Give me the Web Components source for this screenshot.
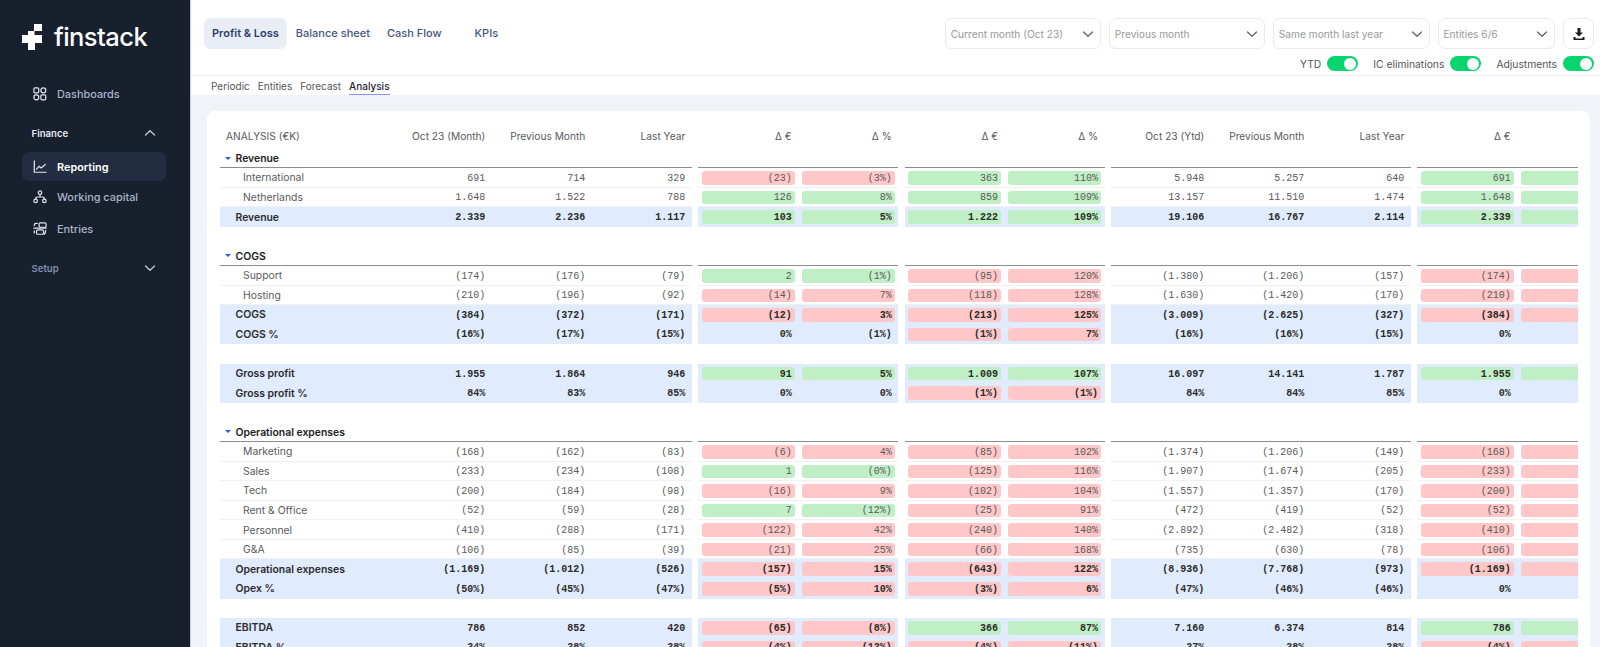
<!DOCTYPE html>
<html lang="en">
<head>
<meta charset="utf-8">
<title>finstack</title>
<style>
    html, body { margin: 0; height: 100%; overflow: hidden; }
    body { font-family: Inter, 'Noto Sans', sans-serif; background: #f0f4f9; }
</style>
</head>
<body>
<fin-app></fin-app>
<script>
const ICONS = {
    dashboards: '<rect x="1" y="1" width="5.6" height="5.6" rx="1.2"/><rect x="9" y="1" width="5.6" height="5.6" rx="2.6"/><rect x="1" y="9" width="5.6" height="5.6" rx="2.6"/><rect x="9" y="9" width="5.6" height="5.6" rx="1.2"/>',
    reporting: '<path d="M1.5 1v13h13.5"/><path d="M4 10.5l3-3.2 2.4 1.8 4.6-4"/>',
    capital: '<circle cx="8" cy="3" r="2"/><circle cx="3" cy="12.5" r="2"/><circle cx="13" cy="12.5" r="2"/><path d="M8 5v3M3 10.5c0-1.6.6-2.5 2-2.5h6c1.4 0 2 .9 2 2.5"/>',
    entries: '<rect x="7" y="1" width="8" height="5" rx="1.5"/><rect x="4" y="9" width="8" height="5" rx="1.5"/><path d="M5 1.5H3.5C2 1.5 1.5 2.5 1.5 4M1 7h14M14.5 9.5c0 2-.5 3.5-1.5 4.5M1.5 10v2.5"/>'
};

const CHEVRON = '<svg width="12" height="12" viewBox="0 0 12 12" fill="none" stroke="currentColor" stroke-width="1.3" stroke-linecap="round" stroke-linejoin="round"><path d="D"/></svg>';

class FinNavItem extends HTMLElement {
    connectedCallback() {
        const active = this.hasAttribute('active');
        this.attachShadow({ mode: 'open' }).innerHTML = `
        <style>
            :host { display: block; }
            .item {
                display: flex;
                align-items: center;
                gap: 10px;
                height: 29px;
                margin-left: 22px;
                width: 144px;
                padding-left: 11px;
                box-sizing: border-box;
                border-radius: 7px;
                font-size: 10.9px;
                font-weight: ${active ? 600 : 500};
                color: ${active ? '#ffffff' : '#a8b5ca'};
                background: ${active ? '#232d41' : 'transparent'};
            }
            svg { flex: none; color: #dfe4ec; }
        </style>
        <div class="item">
            <svg width="14" height="14" viewBox="0 0 16 16" fill="none" stroke="currentColor" stroke-width="1.4" stroke-linecap="round">${ICONS[this.getAttribute('icon')]}</svg>
            <slot></slot>
        </div>`;
    }
}

class FinNavGroup extends HTMLElement {
    connectedCallback() {
        const open = this.hasAttribute('open');
        this.attachShadow({ mode: 'open' }).innerHTML = `
        <style>
            :host { display: flex; align-items: center; justify-content: space-between; padding: 0 34px 0 31.5px; height: 20px;
                font-size: 9.6px; font-weight: 600; color: ${open ? '#e6eaf1' : '#7f92b0'}; }
            svg { color: #c3ccd9; }
        </style>
        <slot></slot>${CHEVRON.replace('D', open ? 'M1.5 8L6 3.8 10.5 8' : 'M1.5 4L6 8.2 10.5 4')}`;
    }
}

class FinSidebar extends HTMLElement {
    connectedCallback() {
        this.attachShadow({ mode: 'open' }).innerHTML = `
        <style>
            :host { display: block; flex: none; width: 191px; height: 100%; background: #18202e; border-right: 1px solid #c9ced6; box-sizing: border-box; }
            .logo { display: flex; align-items: center; gap: 12px; height: 26px; padding: 24px 0 0 22px; }
            .word { font-size: 25.5px; font-weight: 500; color: #fff; letter-spacing: -.55px; line-height: 26px; }
            .dash { margin-top: 29px; }
            .finance { margin-top: 15px; }
            .reporting { margin-top: 9px; }
            .capital { margin-top: 1.500px; }
            .entries { margin-top: 2.500px; }
            .setup { margin-top: 15px; }
        </style>
        <div class="logo">
            <svg width="20" height="26" viewBox="0 0 20 26" fill="#fff"><path d="M12 0h8v7h-8z"/><path d="M6 7h6.500v4H20v8h-7v7H6v-7H0v-8h6z"/></svg>
            <span class="word">finstack</span>
        </div>
        <fin-nav-item class="dash" icon="dashboards">Dashboards</fin-nav-item>
        <fin-nav-group class="finance" open>Finance</fin-nav-group>
        <fin-nav-item class="reporting" icon="reporting" active>Reporting</fin-nav-item>
        <fin-nav-item class="capital" icon="capital">Working capital</fin-nav-item>
        <fin-nav-item class="entries" icon="entries">Entries</fin-nav-item>
        <fin-nav-group class="setup">Setup</fin-nav-group>`;
    }
}

class FinSelect extends HTMLElement {
    connectedCallback() {
        this.attachShadow({ mode: 'open' }).innerHTML = `
        <style>
            :host {
                display: flex; align-items: center; justify-content: space-between;
                box-sizing: border-box; height: 31px; width: ${this.getAttribute('width')}px;
                padding: 0 6px 0 4.500px;
                border: 1px solid #e8eaee; border-radius: 7px; background: #fff;
                font-size: 10.2px; color: #9a9a9a;
            }
            svg { color: #666; }
        </style>
        <slot></slot>${CHEVRON.replace('D', 'M1.500 4L6 8.200 10.500 4')}`;
    }
}

class FinToggle extends HTMLElement {
    connectedCallback() {
        this.attachShadow({ mode: 'open' }).innerHTML = `
        <style>
            :host { display: flex; align-items: center; gap: 6px; font-size: 10.3px; color: #555; }
            .track { position: relative; width: 31px; height: 15px; border-radius: 8px; background: #08d56e; }
            .knob { position: absolute; right: 2px; top: 1.5px; width: 12px; height: 12px; border-radius: 50%; background: #fff; }
        </style>
        <slot></slot><div class="track"><div class="knob"></div></div>`;
    }
}

class FinTopbar extends HTMLElement {
    connectedCallback() {
        this.attachShadow({ mode: 'open' }).innerHTML = `
        <style>
            :host { display: flex; justify-content: space-between; box-sizing: border-box; height: 76px; padding: 18px 6px 0 13px; background: #fff; border-bottom: 1px solid #ececf0; }
            .tabs { display: flex; align-items: flex-start; font-size: 11px; font-weight: 500; color: #44557c; }
            .tabs span { display: block; line-height: 31px; }
            .on { padding: 0 8px; background: #e9edf5; border-radius: 7px; font-weight: 600; color: #2c3e6b; margin-right: 9px; }
            .cash { margin-left: 17px; }
            .kpi { margin-left: 33px; }
            .tools { display: flex; flex-direction: column; align-items: flex-end; gap: 7px; }
            .row { display: flex; gap: 8.100px; }
            .toggles { gap: 15px; }
            .dl { box-sizing: border-box; width: 31px; height: 31px; display: flex; align-items: center; justify-content: center; border: 1px solid #e8eaee; border-radius: 7px; }
        </style>
        <div class="tabs">
            <span class="on">Profit &amp; Loss</span>
            <span>Balance sheet</span>
            <span class="cash">Cash Flow</span>
            <span class="kpi">KPIs</span>
        </div>
        <div class="tools">
            <div class="row">
                <fin-select width="156">Current month (Oct 23)</fin-select>
                <fin-select width="156">Previous month</fin-select>
                <fin-select width="156.500">Same month last year</fin-select>
                <fin-select width="117">Entities 6/6</fin-select>
                <div class="dl"><svg width="14" height="14" viewBox="0 0 14 14" fill="#1c1c1c"><path d="M5.500 1h3v4.500h2.500L7 9.500 3 5.500h2.500z"/><path d="M1.500 10h2v1.500h7V10h2v3h-11z"/></svg></div>
            </div>
            <div class="row toggles">
                <fin-toggle>YTD</fin-toggle>
                <fin-toggle>IC eliminations</fin-toggle>
                <fin-toggle>Adjustments</fin-toggle>
            </div>
        </div>`;
    }
}

class FinSubtabs extends HTMLElement {
    connectedCallback() {
        this.attachShadow({ mode: 'open' }).innerHTML = `
        <style>
            :host { display: flex; gap: 8px; box-sizing: border-box; height: 19px; padding-left: 20px; background: #fff; font-size: 10px; color: #555; line-height: 20px; }
            span { display: block; height: 19px; box-sizing: border-box; }
            .on { color: #1f2433; font-weight: 500; border-bottom: 1px solid #8f95ee; }
        </style>
        <span>Periodic</span><span>Entities</span><span>Forecast</span><span class="on">Analysis</span>`;
    }
}

class FinRow extends HTMLElement {
    connectedCallback() {
        const kind = this.getAttribute('kind');
        const values = (this.getAttribute('values') || '').split('|');

        // green/red pills carry a g: or r: prefix in the values attribute
        const cell = (v = '') => {
            const tone = /^[gr]:/.test(v) ? v[0] : '';
            return `<div class="cell ${tone ? 'pill ' + tone : ''}"><span>${tone ? v.slice(2) : v}</span></div>`;
        };
        const group = (from, to) => `<div class="group">${values.slice(from, to).map(cell).join('') || '<div></div>'}</div>`;

        this.attachShadow({ mode: 'open' }).innerHTML = `
        <style>
            :host {
                display: grid;
                grid-template-columns: 472px 200px 200px 300px 200px;
                column-gap: 6.330px;
                height: 19.565px;
                font-size: 10px;
                line-height: 12px;
                color: #5a5a5a;
            }
            .group { display: flex; box-sizing: border-box; min-width: 0; --line: transparent; background: linear-gradient(var(--line), var(--line)) 0 100% / 100% 1px no-repeat; }
            .label { flex: 1; min-width: 0; display: flex; align-items: center; font-family: Inter, sans-serif; font-size: 10.400px; white-space: nowrap; box-sizing: border-box; padding: 1px 0 0 23px; }
            .cell { flex: none; width: 100px; box-sizing: border-box; padding-right: 6.670px; display: flex; align-items: center; justify-content: flex-end; font-family: 'Liberation Mono', monospace; }
            .cell span { position: relative; top: 1px; }
            .pill { position: relative; }
            .pill::before { content: ''; position: absolute; left: 3.330px; right: 3.330px; top: 3px; bottom: 3px; border-radius: 3px; }
            .r::before { background: #ffc7c7; }
            .g::before { background: #c0efc5; }

            :host([kind=head]) .cell { font-family: Inter, sans-serif; font-size: 10.200px; }
            :host([kind=head]) .cell span { top: -2.500px; }
            :host([kind=head]) .label { padding: 0 0 5px 2px; font-size: 10.200px; margin-left: 4px; }

            :host([kind=section]) .group { --line: #8c8c8c; }
            :host([kind=section]) .label { padding-left: 15.500px; font-weight: 600; color: #222; position: relative; }
            :host([kind=section]) .label::before {
                content: ''; position: absolute; left: 4.500px; top: 8px;
                border-left: 3px solid transparent; border-right: 3px solid transparent; border-top: 3px solid #2a5bd7;
            }

            :host([kind=sub]) .group { --line: #f1f1f1; }
            :host([kind=sub]) .group:first-child { background-position: 23px 100%; }

            :host([kind=total]) .group { background: #e0ebfd; }
            :host([kind=total]) { color: #2c2c2c; font-weight: 700; }
            :host([kind=total]) .label { padding-left: 15.500px; font-weight: 600; }
        </style>
        <div class="group"><div class="label"><slot></slot></div>${kind === 'blank' || kind === 'section' ? '' : values.slice(0, 3).map(cell).join('')}</div>
        ${kind === 'blank' ? '<div></div><div></div><div></div><div></div>' : group(3, 5) + group(5, 7) + group(7, 10) + group(10, 12)}`;
    }
}

const REPORT = [
    ['section', 'Revenue'],
    ['sub', 'International', '691|714|329|r:(23)|r:(3%)|g:363|g:110%|5.948|5.257|640|g:691|g:'],
    ['sub', 'Netherlands', '1.648|1.522|788|g:126|g:8%|g:859|g:109%|13.157|11.510|1.474|g:1.648|g:'],
    ['total', 'Revenue', '2.339|2.236|1.117|g:103|g:5%|g:1.222|g:109%|19.106|16.767|2.114|g:2.339|g:'],
    ['blank'],
    ['section', 'COGS'],
    ['sub', 'Support', '(174)|(176)|(79)|g:2|g:(1%)|r:(95)|r:120%|(1.380)|(1.206)|(157)|r:(174)|r:'],
    ['sub', 'Hosting', '(210)|(196)|(92)|r:(14)|r:7%|r:(118)|r:128%|(1.630)|(1.420)|(170)|r:(210)|r:'],
    ['total', 'COGS', '(384)|(372)|(171)|r:(12)|r:3%|r:(213)|r:125%|(3.009)|(2.625)|(327)|r:(384)|r:'],
    ['total', 'COGS %', '(16%)|(17%)|(15%)|0%|(1%)|r:(1%)|r:7%|(16%)|(16%)|(15%)|0%|'],
    ['blank'],
    ['total', 'Gross profit', '1.955|1.864|946|g:91|g:5%|g:1.009|g:107%|16.097|14.141|1.787|g:1.955|g:'],
    ['total', 'Gross profit %', '84%|83%|85%|0%|0%|r:(1%)|r:(1%)|84%|84%|85%|0%|'],
    ['blank'],
    ['section', 'Operational expenses'],
    ['sub', 'Marketing', '(168)|(162)|(83)|r:(6)|r:4%|r:(85)|r:102%|(1.374)|(1.206)|(149)|r:(168)|r:'],
    ['sub', 'Sales', '(233)|(234)|(108)|g:1|g:(0%)|r:(125)|r:116%|(1.907)|(1.674)|(205)|r:(233)|r:'],
    ['sub', 'Tech', '(200)|(184)|(98)|r:(16)|r:9%|r:(102)|r:104%|(1.557)|(1.357)|(170)|r:(200)|r:'],
    ['sub', 'Rent &amp; Office', '(52)|(59)|(28)|g:7|g:(12%)|r:(25)|r:91%|(472)|(419)|(52)|r:(52)|r:'],
    ['sub', 'Personnel', '(410)|(288)|(171)|r:(122)|r:42%|r:(240)|r:140%|(2.892)|(2.482)|(318)|r:(410)|r:'],
    ['sub', 'G&amp;A', '(106)|(85)|(39)|r:(21)|r:25%|r:(66)|r:168%|(735)|(630)|(78)|r:(106)|r:'],
    ['total', 'Operational expenses', '(1.169)|(1.012)|(526)|r:(157)|r:15%|r:(643)|r:122%|(8.936)|(7.768)|(973)|r:(1.169)|r:'],
    ['total', 'Opex %', '(50%)|(45%)|(47%)|r:(5%)|r:10%|r:(3%)|r:6%|(47%)|(46%)|(46%)|0%|'],
    ['blank'],
    ['total', 'EBITDA', '786|852|420|r:(65)|r:(8%)|g:366|g:87%|7.160|6.374|814|g:786|g:'],
    ['total', 'EBITDA %', '34%|38%|38%|r:(4%)|r:(12%)|r:(4%)|r:(11%)|37%|38%|38%|r:(4%)|r:']
];

class FinReport extends HTMLElement {
    connectedCallback() {
        const rows = REPORT.map(([kind, label = '', values = '']) =>
            `<fin-row kind="${kind}" values="${values}">${label}</fin-row>`).join('');
        this.attachShadow({ mode: 'open' }).innerHTML = `
        <style>
            :host { display: block; height: 100%; box-sizing: border-box; padding: 18px 12px 0 13px; background: #fff; border-radius: 8px 8px 0 0; }
            .scroll { overflow: hidden; height: 100%; }
        </style>
        <div class="scroll">
            <fin-row kind="head" values="Oct 23 (Month)|Previous Month|Last Year|Δ €|Δ %|Δ €|Δ %|Oct 23 (Ytd)|Previous Month|Last Year|Δ €|">ANALYSIS (€K)</fin-row>
            ${rows}
        </div>`;
    }
}

class FinApp extends HTMLElement {
    connectedCallback() {
        this.attachShadow({ mode: 'open' }).innerHTML = `
        <style>
            :host { display: flex; height: 100vh; overflow: hidden; }
            main { flex: 1; min-width: 0; display: flex; flex-direction: column; }
            .content { flex: 1; min-height: 0; padding: 16px 10px 0 16px; }
        </style>
        <fin-sidebar></fin-sidebar>
        <main>
            <fin-topbar></fin-topbar>
            <fin-subtabs></fin-subtabs>
            <div class="content"><fin-report></fin-report></div>
        </main>`;
    }
}

customElements.define('fin-nav-item', FinNavItem);
customElements.define('fin-nav-group', FinNavGroup);
customElements.define('fin-sidebar', FinSidebar);
customElements.define('fin-select', FinSelect);
customElements.define('fin-toggle', FinToggle);
customElements.define('fin-topbar', FinTopbar);
customElements.define('fin-subtabs', FinSubtabs);
customElements.define('fin-row', FinRow);
customElements.define('fin-report', FinReport);
customElements.define('fin-app', FinApp);
</script>
</body>
</html>
